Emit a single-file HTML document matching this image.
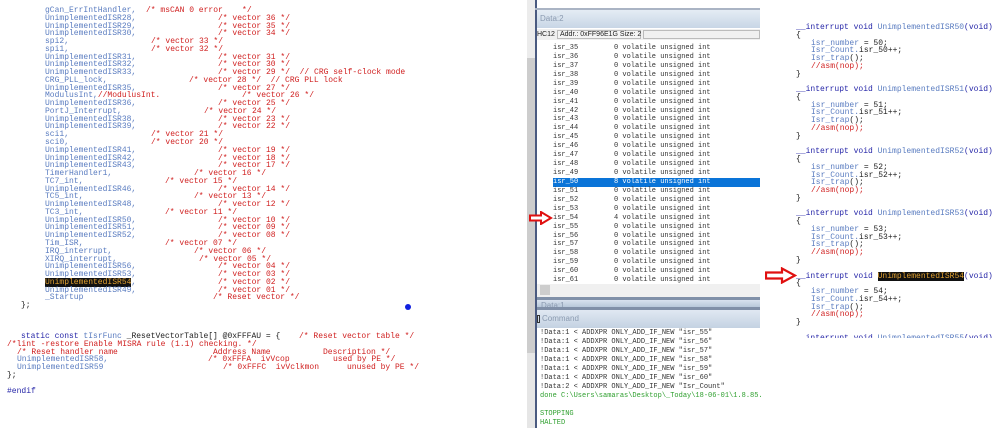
<!DOCTYPE html>
<html><head><meta charset="utf-8"><style>
*{margin:0;padding:0;box-sizing:border-box}
body{width:999px;height:433px;overflow:hidden;background:#fff;position:relative;font-family:"Liberation Mono",monospace}
.code{position:absolute;font-size:8px;line-height:7.77px;white-space:normal}
.code div{position:relative;height:7.77px}
.code span{position:absolute;top:0;white-space:pre}
.i{color:#5a7cc0}.c{color:#d02020}.k{color:#2626a8}.t{color:#222}
.hl{background:#111;color:#e0a030}
.mid{position:absolute;left:535px;top:0;width:225px;height:433px}
.row{position:absolute;left:16px;font-size:7px;height:9px;line-height:9px;white-space:pre;color:#333;width:209px}
.cmd{position:absolute;left:5px;font-size:7px;line-height:9px;white-space:pre;color:#333}
</style></head><body>
<div class="code" style="left:7px;top:7px;width:515px"><div><span class="i" style="left:38px">gCan_ErrIntHandler,</span><span class="c" style="left:139px">/* msCAN 0 error    */</span></div><div><span class="i" style="left:38px">UnimplementedISR28,</span><span class="c" style="left:211px">/* vector 36 */</span></div><div><span class="i" style="left:38px">UnimplementedISR29,</span><span class="c" style="left:211px">/* vector 35 */</span></div><div><span class="i" style="left:38px">UnimplementedISR30,</span><span class="c" style="left:211px">/* vector 34 */</span></div><div><span class="i" style="left:38px">spi2,</span><span class="c" style="left:144px">/* vector 33 */</span></div><div><span class="i" style="left:38px">spi1,</span><span class="c" style="left:144px">/* vector 32 */</span></div><div><span class="i" style="left:38px">UnimplementedISR31,</span><span class="c" style="left:211px">/* vector 31 */</span></div><div><span class="i" style="left:38px">UnimplementedISR32,</span><span class="c" style="left:211px">/* vector 30 */</span></div><div><span class="i" style="left:38px">UnimplementedISR33,</span><span class="c" style="left:211px">/* vector 29 */  // CRG self-clock mode</span></div><div><span class="i" style="left:38px">CRG_PLL_lock,</span><span class="c" style="left:182px">/* vector 28 */  // CRG PLL lock</span></div><div><span class="i" style="left:38px">UnimplementedISR35,</span><span class="c" style="left:211px">/* vector 27 */</span></div><div><span class="i" style="left:38px">ModulusInt,<b class="c" style="font-weight:normal">//ModulusInt.</b></span><span class="c" style="left:235px">/* vector 26 */</span></div><div><span class="i" style="left:38px">UnimplementedISR36,</span><span class="c" style="left:211px">/* vector 25 */</span></div><div><span class="i" style="left:38px">PortJ_Interrupt,</span><span class="c" style="left:197px">/* vector 24 */</span></div><div><span class="i" style="left:38px">UnimplementedISR38,</span><span class="c" style="left:211px">/* vector 23 */</span></div><div><span class="i" style="left:38px">UnimplementedISR39,</span><span class="c" style="left:211px">/* vector 22 */</span></div><div><span class="i" style="left:38px">sci1,</span><span class="c" style="left:144px">/* vector 21 */</span></div><div><span class="i" style="left:38px">sci0,</span><span class="c" style="left:144px">/* vector 20 */</span></div><div><span class="i" style="left:38px">UnimplementedISR41,</span><span class="c" style="left:211px">/* vector 19 */</span></div><div><span class="i" style="left:38px">UnimplementedISR42,</span><span class="c" style="left:211px">/* vector 18 */</span></div><div><span class="i" style="left:38px">UnimplementedISR43,</span><span class="c" style="left:211px">/* vector 17 */</span></div><div><span class="i" style="left:38px">TimerHandler1,</span><span class="c" style="left:187px">/* vector 16 */</span></div><div><span class="i" style="left:38px">TC7_int,</span><span class="c" style="left:158px">/* vector 15 */</span></div><div><span class="i" style="left:38px">UnimplementedISR46,</span><span class="c" style="left:211px">/* vector 14 */</span></div><div><span class="i" style="left:38px">TC5_int,</span><span class="c" style="left:187px">/* vector 13 */</span></div><div><span class="i" style="left:38px">UnimplementedISR48,</span><span class="c" style="left:211px">/* vector 12 */</span></div><div><span class="i" style="left:38px">TC3_int,</span><span class="c" style="left:158px">/* vector 11 */</span></div><div><span class="i" style="left:38px">UnimplementedISR50,</span><span class="c" style="left:211px">/* vector 10 */</span></div><div><span class="i" style="left:38px">UnimplementedISR51,</span><span class="c" style="left:211px">/* vector 09 */</span></div><div><span class="i" style="left:38px">UnimplementedISR52,</span><span class="c" style="left:211px">/* vector 08 */</span></div><div><span class="i" style="left:38px">Tim_ISR,</span><span class="c" style="left:158px">/* vector 07 */</span></div><div><span class="i" style="left:38px">IRQ_interrupt,</span><span class="c" style="left:187px">/* vector 06 */</span></div><div><span class="i" style="left:38px">XIRQ_interrupt,</span><span class="c" style="left:192px">/* vector 05 */</span></div><div><span class="i" style="left:38px">UnimplementedISR56,</span><span class="c" style="left:211px">/* vector 04 */</span></div><div><span class="i" style="left:38px">UnimplementedISR53,</span><span class="c" style="left:211px">/* vector 03 */</span></div><div><span class="i" style="left:38px"><b class="hl" style="font-weight:normal">UnimplementedISR54</b>,</span><span class="c" style="left:211px">/* vector 02 */</span></div><div><span class="i" style="left:38px">UnimplementedISR49,</span><span class="c" style="left:211px">/* vector 01 */</span></div><div><span class="i" style="left:38px">_Startup</span><span class="c" style="left:206px">/* Reset vector */</span></div><div><span class="t" style="left:14px">};</span></div><div></div><div></div><div></div><div><span style="left:14px"><b class="k" style="font-weight:normal">static const</b> <b class="i" style="font-weight:normal">tIsrFunc</b> <b class="t" style="font-weight:normal">_ResetVectorTable[] @0xFFFAU = {</b></span><span class="c" style="left:292px">/* Reset vector table */</span></div><div><span class="c" style="left:0">/*lint -restore Enable MISRA rule (1.1) checking. */</span></div><div><span class="c" style="left:10px">/* Reset handler name</span><span class="c" style="left:206px">Address Name</span><span class="c" style="left:316px">Description */</span></div><div><span class="i" style="left:10px">UnimplementedISR58,</span><span class="c" style="left:201px">/* 0xFFFA  ivVcop</span><span class="c" style="left:326px">used by PE */</span></div><div><span class="i" style="left:10px">UnimplementedISR59</span><span class="c" style="left:216px">/* 0xFFFC  ivVclkmon</span><span class="c" style="left:340px">unused by PE */</span></div><div><span class="t" style="left:0">};</span></div><div></div><div><span class="k" style="left:0">#endif</span></div></div>
<div style="position:absolute;left:405px;top:304px;width:6px;height:6px;border-radius:50%;background:#1020e0"></div>

<div style="position:absolute;left:527px;top:0;width:8px;height:58px;background:#ececec"></div>
<div style="position:absolute;left:527px;top:58px;width:8px;height:295px;background:#cdcdcd"></div>
<div style="position:absolute;left:527px;top:353px;width:8px;height:75px;background:#e6e6e6"></div>
<div style="position:absolute;left:535px;top:0;width:2px;height:428px;background:#4a5a80"></div>

<div class="mid">
  <div style="position:absolute;left:0;top:8px;width:225px;height:2px;background:#aab4c4"></div>
  <div style="position:absolute;left:2px;top:10px;width:223px;height:18px;background:linear-gradient(#e4ecf4,#c8d6e6);font-family:'Liberation Sans',sans-serif;font-size:8px;color:#8a9ab0;line-height:18px;padding-left:3px">Data:2</div>
  <div style="position:absolute;left:2px;top:29px;width:223px;height:11px;background:#f0f0f0;font-family:'Liberation Sans',sans-serif;font-size:7px;line-height:11px;color:#222;white-space:pre"><span style="position:absolute;left:0">HC12</span><span style="position:absolute;left:20px;top:1px;height:9px;width:84px;border:1px solid #bbb;line-height:8px;padding-left:2px;background:#f4f4f4">Addr.: 0xFF96E1G Size: 2</span><span style="position:absolute;left:106px;top:1px;height:9px;width:117px;border:1px solid #bbb"></span></div>
  <div style="position:absolute;left:2px;top:40px;width:223px;height:244px;overflow:hidden" id="list"></div>
  <div style="position:absolute;left:2px;top:284px;width:223px;height:13px;background:#f0f0f0"><div style="position:absolute;left:3px;top:1px;width:10px;height:10px;background:#cdcdcd"></div></div>
  <div style="position:absolute;left:2px;top:297px;width:223px;height:3px;background:#8090a8"></div>
  <div style="position:absolute;left:2px;top:300px;width:223px;height:7px;background:linear-gradient(#d8e2ee,#b8c8da);overflow:hidden;font-family:'Liberation Sans',sans-serif;font-size:8px;color:#8a9ab0;line-height:12px;padding-left:4px">Data:1</div>
  <div style="position:absolute;left:2px;top:307px;width:223px;height:3px;background:#8090a8"></div>
  <div style="position:absolute;left:2px;top:310px;width:223px;height:18px;background:linear-gradient(#e0e8f2,#c4d2e2);font-family:'Liberation Sans',sans-serif;font-size:8px;color:#8a9ab0;line-height:18px;padding-left:5px"><span style="position:absolute;left:0;top:5px;width:3px;height:8px;border:1px solid #333"></span>Command</div>
  <div class="cmd" style="top:329px">!Data:1 &lt; ADDXPR ONLY_ADD_IF_NEW "isr_55"
!Data:1 &lt; ADDXPR ONLY_ADD_IF_NEW "isr_56"
!Data:1 &lt; ADDXPR ONLY_ADD_IF_NEW "isr_57"
!Data:1 &lt; ADDXPR ONLY_ADD_IF_NEW "isr_58"
!Data:1 &lt; ADDXPR ONLY_ADD_IF_NEW "isr_59"
!Data:1 &lt; ADDXPR ONLY_ADD_IF_NEW "isr_60"
!Data:2 &lt; ADDXPR ONLY_ADD_IF_NEW "Isr_Count"
<span style="color:#30a030">done C:\Users\samaras\Desktop\_Today\18-06-01\1.8.85.</span>

<span style="color:#30a030">STOPPING
HALTED</span></div>
</div>

<div class="code" style="left:796px;top:19px;padding-top:5px;width:203px;height:319px;overflow:hidden" id="rc"></div>

<svg style="position:absolute;left:529px;top:211px" width="24" height="14" viewBox="0 0 24 14"><path d="M1 4.5H12V1L22 7L12 13V9.5H1Z" fill="#fff" stroke="#e01010" stroke-width="2"/></svg>
<svg style="position:absolute;left:765px;top:267px" width="32" height="17" viewBox="0 0 32 17"><path d="M1 5.5H17V1.5L30 8.5L17 15.5V11.5H1Z" fill="#fff" stroke="#e01010" stroke-width="2.2"/></svg>

<script>
var l=document.getElementById('list'),h='';
for(var n=35;n<=61;n++){var t=4+(n-35)*8.93;var sel=n==50;var v=n==50?'8':(n==54?'4':'0');
h+='<div class="row" style="top:'+t+'px;'+(sel?'background:#0a74d8;color:#fff;':'')+'">isr_'+n+'<span style="position:absolute;left:61px">'+v+' volatile unsigned int</span></div>';}
l.innerHTML=h;
var r=document.getElementById('rc'),s='';
for(var k=50;k<=55;k++){var nm=k==54?'<b class="hl" style="font-weight:normal">UnimplementedISR54</b>':'<b class="i" style="font-weight:normal">UnimplementedISR'+k+'</b>';
s+='<div><span class="k" style="left:0">__interrupt void '+nm+'<b class="k" style="font-weight:normal">(void)</b></span></div>';
s+='<div><span class="t" style="left:0">{</span></div>';
s+='<div><span class="i" style="left:15px">isr_number <b class="t" style="font-weight:normal">= '+k+';</b></span></div>';
s+='<div><span class="i" style="left:15px">Isr_Count.<b class="t" style="font-weight:normal">isr_'+k+'++;</b></span></div>';
s+='<div><span class="i" style="left:15px">Isr_trap<b class="t" style="font-weight:normal">();</b></span></div>';
s+='<div><span class="c" style="left:15px">//asm(nop);</span></div>';
s+='<div><span class="t" style="left:0">}</span></div><div></div>';}
r.innerHTML=s;
</script>
</body></html>
